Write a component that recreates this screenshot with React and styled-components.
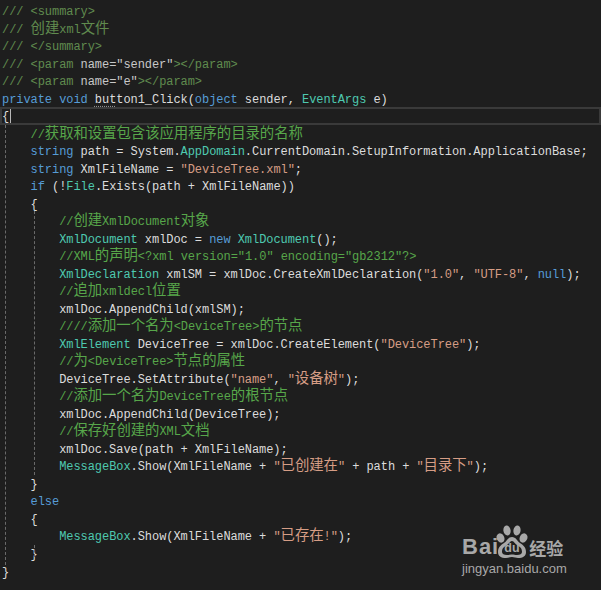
import React from "react";
import styled, { createGlobalStyle } from "styled-components";

const GlobalStyle = createGlobalStyle`
    html, body {
        margin: 0;
        padding: 0;
        background: #1e1e1e;
    }
`;

const Editor = styled.div`
    position: relative;
    width: 601px;
    height: 590px;
    overflow: hidden;
    box-sizing: border-box;
    padding-top: 2px;
    background: #1e1e1e;
    color: #dcdcdc;
    font-family: "Liberation Mono", monospace;
    font-size: 12px;
    letter-spacing: -0.06px;
`;

const Line = styled.div`
    height: 17.53px;
    line-height: 21.5px;
    padding-left: 2px;
    white-space: pre;
    box-sizing: border-box;
    ${(p) => p.$current && `
        outline: 2px solid #3a3a3a;
        outline-offset: -2px;
    `}
`;

const Token = styled.span`
    color: ${(p) => p.$color};
`;

const Cjk = styled.span`
    font-family: "Noto Sans CJK SC", sans-serif;
    font-size: 14.4px;
    line-height: 0;
`;

const Squiggled = styled.span`
    text-decoration: underline dotted #909090;
    text-underline-offset: 3px;
`;

const Caret = styled.span`
    display: inline-block;
    width: 1px;
    height: 15px;
    margin-left: 1px;
    vertical-align: -4px;
    background: #b8b8b8;
`;

const Guide = styled.div`
    position: absolute;
    left: ${(p) => p.$x}px;
    top: ${(p) => p.$top}px;
    height: ${(p) => p.$height}px;
    border-left: 1px dashed #6a6a6a;
`;

const Watermark = styled.div`
    position: absolute;
    left: 462px;
    top: 525px;
    width: 130px;
    color: #a8a8a8;
    font-family: "Liberation Sans", sans-serif;
    letter-spacing: 0;
`;

const LogoRow = styled.div`
    display: flex;
    align-items: flex-end;
    height: 34px;
    font-size: 22px;
    line-height: 24px;
    font-weight: 700;
`;

const LogoWord = styled.span`
    display: block;
    letter-spacing: 1px;
`;

const LogoCn = styled.span`
    font-family: "Noto Sans CJK SC", sans-serif;
    font-size: 17px;
    line-height: 22px;
    font-weight: 700;
    margin-left: 1px;
`;

const PawBox = styled.div`
    position: relative;
    width: 32px;
    height: 34px;
    margin-left: -3px;
`;

const PawDu = styled.span`
    position: absolute;
    left: 8px;
    bottom: 5px;
    color: #a8a8a8;
    font-size: 12.5px;
    line-height: 12px;
`;

const LogoUrl = styled.div`
    font-size: 13px;
    line-height: 16px;
    margin-top: 2px;
`;

const KW = "#569cd6";
const TY = "#4ec9b0";
const ST = "#d69d85";
const CM = "#57a64a";
const DOC = "#608b4e";
const DT = "#c8c8c8";

// [text, colour]: a piece without colour keeps the default text colour
const lines = [
    [["/// <summary>", DOC]],
    [["/// 创建xml文件", DOC]],
    [["/// </summary>", DOC]],
    [["/// <param ", DOC], ["name=\"sender\"", DT], ["></param>", DOC]],
    [["/// <param ", DOC], ["name=\"e\"", DT], ["></param>", DOC]],
    [["private void", KW], [" "], ["but", null, "squiggle"], ["ton1_Click("], ["object", KW], [" sender, "], ["EventArgs", TY], [" e)"]],
    [["{"], ["", null, "caret"]],
    [["    //获取和设置包含该应用程序的目录的名称", CM]],
    [["    "], ["string", KW], [" path = System."], ["AppDomain", TY], [".CurrentDomain.SetupInformation.ApplicationBase;"]],
    [["    "], ["string", KW], [" XmlFileName = "], ["\"DeviceTree.xml\"", ST], [";"]],
    [["    "], ["if", KW], [" (!"], ["File", TY], [".Exists(path + XmlFileName))"]],
    [["    {"]],
    [["        //创建XmlDocument对象", CM]],
    [["        "], ["XmlDocument", TY], [" xmlDoc = "], ["new", KW], [" "], ["XmlDocument", TY], ["();"]],
    [["        //XML的声明<?xml version=\"1.0\" encoding=\"gb2312\"?>", CM]],
    [["        "], ["XmlDeclaration", TY], [" xmlSM = xmlDoc.CreateXmlDeclaration("], ["\"1.0\"", ST], [", "], ["\"UTF-8\"", ST], [", "], ["null", KW], [");"]],
    [["        //追加xmldecl位置", CM]],
    [["        xmlDoc.AppendChild(xmlSM);"]],
    [["        ////添加一个名为<DeviceTree>的节点", CM]],
    [["        "], ["XmlElement", TY], [" DeviceTree = xmlDoc.CreateElement("], ["\"DeviceTree\"", ST], [");"]],
    [["        //为<DeviceTree>节点的属性", CM]],
    [["        DeviceTree.SetAttribute("], ["\"name\"", ST], [", "], ["\"设备树\"", ST], [");"]],
    [["        //添加一个名为DeviceTree的根节点", CM]],
    [["        xmlDoc.AppendChild(DeviceTree);"]],
    [["        //保存好创建的XML文档", CM]],
    [["        xmlDoc.Save(path + XmlFileName);"]],
    [["        "], ["MessageBox", TY], [".Show(XmlFileName + "], ["\"已创建在\"", ST], [" + path + "], ["\"目录下\"", ST], [");"]],
    [["    }"]],
    [["    "], ["else", KW]],
    [["    {"]],
    [["        "], ["MessageBox", TY], [".Show(XmlFileName + "], ["\"已存在!\"", ST], [");"]],
    [["    }"]],
    [["}"]],
];

// CJK runs get their own span so one glyph fills two columns of the code font
const splitCjk = (text) =>
    text.split(/([\u4e00-\u9fff]+)/).map((part, i) =>
        i % 2 === 1 ? <Cjk key={i}>{part}</Cjk> : part
    );

const renderPiece = ([text, color, kind], key) => {
    if (kind === "caret") return <Caret key={key} />;
    if (kind === "squiggle") return <Squiggled key={key}>{text}</Squiggled>;
    if (color) return <Token key={key} $color={color}>{splitCjk(text)}</Token>;
    return <React.Fragment key={key}>{splitCjk(text)}</React.Fragment>;
};

const Paw = () => (
    <svg width="32" height="34" viewBox="0 0 32 34" fill="#a8a8a8">
        <ellipse cx="4.5" cy="13" rx="3.8" ry="4.8" transform="rotate(-25 4.5 13)" />
        <ellipse cx="11" cy="5.5" rx="3.6" ry="5" transform="rotate(-8 11 5.5)" />
        <ellipse cx="21" cy="5.5" rx="3.6" ry="5" transform="rotate(8 21 5.5)" />
        <ellipse cx="27.5" cy="13" rx="3.8" ry="4.8" transform="rotate(25 27.5 13)" />
        <path d="M16 12c-4 0-5 4-8 6-3 2-6 4-6 9 0 4 3 6 8 6 2 0 4-1 6-1s4 1 6 1c5 0 8-2 8-6 0-5-3-7-6-9-3-2-4-6-8-6z" />
        <path d="M16 16c-2 0-3 3-5 4-3 2-5 3-5 7 0 2 2 3 5 3 2 0 3-.5 5-.5s3 .5 5 .5c3 0 5-1 5-3 0-4-2-5-5-7-2-1-3-4-5-4z" fill="#1e1e1e" />
    </svg>
);

export default function App() {
    return (
        <>
            <GlobalStyle />
            <Editor>
                {lines.map((pieces, i) => (
                    <Line key={i} $current={i === 6}>
                        {pieces.map(renderPiece)}
                    </Line>
                ))}

                {/* Направляющие отступов */}
                <Guide $x={5} $top={125} $height={440} />
                <Guide $x={34} $top={211} $height={264} />
                <Guide $x={34} $top={545} $height={12} />

                {/* Водяной знак */}
                <Watermark>
                    <LogoRow>
                        <LogoWord>Bai</LogoWord>
                        <PawBox>
                            <Paw />
                            <PawDu>du</PawDu>
                        </PawBox>
                        <LogoCn>经验</LogoCn>
                    </LogoRow>
                    <LogoUrl>jingyan.baidu.com</LogoUrl>
                </Watermark>
            </Editor>
        </>
    );
}
